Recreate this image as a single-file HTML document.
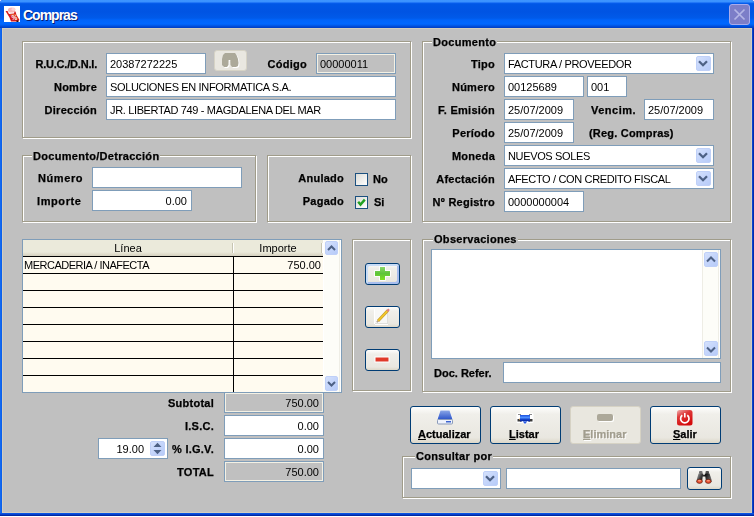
<!DOCTYPE html>
<html><head><meta charset="utf-8">
<style>
*{box-sizing:border-box;margin:0;padding:0}
html,body{width:754px;height:517px;overflow:hidden;background:#fff}
body{position:relative;font-family:"Liberation Sans",sans-serif;font-size:11px;color:#000}
.l,.lr,.gt,.in,.cb,.t{will-change:transform}
.a{position:absolute}
#win{position:absolute;left:0;top:0;width:754px;height:516px;background:#0831d9;border-radius:3px 3px 0 0;overflow:hidden}
#title{position:absolute;left:0;top:0;width:754px;height:28px;background:linear-gradient(to bottom,#3d95ff 0px,#3a92ff 2px,#0a60f0 3px,#0058e6 4px,#0054e3 12px,#005ae9 18px,#0064fa 20px,#0068ff 24px,#0058e8 25.5px,#0046d0 27px,#003ec0 28px)}
#body{position:absolute;left:2px;top:28px;width:750px;height:485px;background:#c0c0c0;border:1px solid #d2cebf}
#lb{position:absolute;left:0;top:28px;width:2px;height:488px;background:linear-gradient(to right,#166ef2,#0a5be8)}
#rb{position:absolute;left:752px;top:28px;width:2px;height:488px;background:linear-gradient(to right,#0a4fe0,#00209a)}
#bb{position:absolute;left:0;top:513px;width:754px;height:3px;background:linear-gradient(to bottom,#0b5cf0,#0540c8,#001c90)}
.g{position:absolute;border:1px solid #a09c8a;box-shadow:inset 1px 1px 0 #fff,1px 1px 0 #fff}
.gt{position:absolute;background:#c0c0c0;font-weight:bold;line-height:13px;padding:0 1px 0 1px;white-space:nowrap;letter-spacing:0.3px}
.l,.lr,.gt{-webkit-text-stroke:0.25px currentColor}
.l{position:absolute;font-weight:bold;line-height:13px;white-space:nowrap}
.lr{position:absolute;font-weight:bold;line-height:13px;white-space:nowrap;text-align:right;letter-spacing:0.25px}
.in{position:absolute;border:1px solid #7f9db9;background:#fff;line-height:13px;padding:4px 0 0 3px;white-space:nowrap;letter-spacing:-0.35px;overflow:hidden}
.n{letter-spacing:0 !important}
.dis{background:#c0c0c0;box-shadow:inset 1px 1px 0 #f4f1e4,inset -1px -1px 0 #f4f1e4}
.r{text-align:right;padding:4px 4px 0 0}
.cb{position:absolute;border:1px solid #7f9db9;background:#fff;line-height:13px;padding:4px 0 0 3px;white-space:nowrap;letter-spacing:-0.35px}
.dd{position:absolute;width:15px;height:15px;border-radius:2px;background:linear-gradient(135deg,#d5e1fc 0%,#c4d5fb 50%,#b7cbf8 100%);border:1px solid #bfd0f8}
.chev{position:absolute;left:2px;top:4px}
.btn{position:absolute;border:1px solid #003c74;border-radius:3px;background:linear-gradient(to bottom,#fefefd 0%,#f0efea 20%,#e9e7e0 85%,#dcd7c8 100%)}
.t{position:absolute;line-height:13px;white-space:nowrap;letter-spacing:-0.35px}
</style></head><body>
<div id="win">
 <div id="title"></div>
 <div id="lb"></div><div id="rb"></div><div id="bb"></div>
 <div id="body"></div>
</div>

<!-- title icon -->
<div class="a" style="left:4px;top:6px;width:16px;height:16px;background:#fff"></div>
<svg class="a" style="left:4px;top:6px" width="16" height="16" viewBox="0 0 16 16">
 <ellipse cx="7.5" cy="4" rx="3.6" ry="2.6" fill="#f6b8b8"/>
 <ellipse cx="9.5" cy="3.2" rx="2" ry="1.6" fill="#fad4d4"/>
 <path d="M1.5 5 L3.5 5 L5 8 L10 7.5 L10.5 5.5 L11.5 5.5 L12.5 9 L15.5 14 L13.5 15.5 L7 15.5 L5.5 11.5 Z" fill="#d61c1c"/>
 <path d="M6 9 L12 8.6" stroke="#f08040" stroke-width="0.8"/>
 <text x="7.6" y="14.4" font-size="6.5" fill="#fff" font-family="Liberation Sans" font-weight="bold">%</text>
 <rect x="12.5" y="14.5" width="2" height="1.5" fill="#301010"/>
</svg>
<div class="a" style="left:24px;top:9px;font-size:14px;line-height:15px;font-weight:bold;color:#0a1a6e;letter-spacing:-1px">Compras</div>
<div class="a" style="left:23px;top:8px;font-size:14px;line-height:15px;font-weight:bold;color:#fff;letter-spacing:-1px">Compras</div>

<!-- close button -->
<div class="a" style="left:729px;top:4px;width:21px;height:21px;border:1px solid #a9acec;border-radius:3px;background:#7c7ec8"></div>
<svg class="a" style="left:729px;top:4px" width="21" height="21"><path d="M5.5 5.5 L15.5 15.5 M15.5 5.5 L5.5 15.5" stroke="#b4b6e6" stroke-width="1.7"/></svg>

<!-- ===== Group 1 ===== -->
<div class="g" style="left:22px;top:41px;width:389px;height:97px"></div>
<div class="lr" style="left:20px;top:58px;width:77px;letter-spacing:-0.2px">R.U.C./D.N.I.</div>
<div class="lr" style="left:20px;top:81px;width:77px">Nombre</div>
<div class="lr" style="left:20px;top:104px;width:77px">Dirección</div>
<div class="in n" style="left:106px;top:53px;width:100px;height:21px">20387272225</div>
<div class="a" style="left:214px;top:50px;width:33px;height:21px;border:1px solid #d6d3c6;border-radius:3px;background:#e9e7e0"></div>
<svg class="a" style="left:218px;top:50px" width="24" height="20" viewBox="0 0 24 20">
 <path d="M7 3 L17 3 L18.5 5 L20 9 L20.5 13 L20 16 L18 17 L14 17 L12.5 15 L12.3 10 L10.6 10 L10.5 15 L9 17 L6 17 L4 15 L4 9 L5 5 Z" fill="#fff" transform="translate(1,1)"/>
 <path d="M7 3 L17 3 L18.5 5 L20 9 L20.5 13 L20 16 L18 17 L14 17 L12.5 15 L12.3 10 L10.6 10 L10.5 15 L9 17 L6 17 L4 15 L4 9 L5 5 Z" fill="#aca999"/>
</svg>
<div class="lr" style="left:250px;top:58px;width:57px">Código</div>
<div class="in dis n" style="left:316px;top:53px;width:80px;height:21px">00000011</div>
<div class="in" style="left:106px;top:76px;width:290px;height:21px">SOLUCIONES EN INFORMATICA S.A.</div>
<div class="in" style="left:106px;top:99px;width:290px;height:21px">JR. LIBERTAD 749 - MAGDALENA DEL MAR</div>

<!-- ===== Documento group ===== -->
<div class="g" style="left:422px;top:41px;width:309px;height:181px"></div>
<div class="gt" style="left:432px;top:36px">Documento</div>
<div class="lr" style="left:421px;top:58px;width:74px">Tipo</div>
<div class="lr" style="left:421px;top:81px;width:74px">Número</div>
<div class="lr" style="left:421px;top:104px;width:74px">F. Emisión</div>
<div class="lr" style="left:421px;top:127px;width:74px">Período</div>
<div class="lr" style="left:421px;top:150px;width:74px">Moneda</div>
<div class="lr" style="left:421px;top:173px;width:74px">Afectación</div>
<div class="lr" style="left:421px;top:196px;width:74px">Nº Registro</div>

<div class="cb" style="left:504px;top:53px;width:210px;height:21px">FACTURA / PROVEEDOR</div>
<div class="dd" style="left:696px;top:56px"><svg class="chev" style="left:1px;top:2.5px" width="10" height="7"><path d="M1 1.2 L5 5.2 L9 1.2" stroke="#4d6185" stroke-width="2.3" fill="none"/></svg></div>
<div class="in n" style="left:504px;top:76px;width:80px;height:21px">00125689</div>
<div class="in n" style="left:587px;top:76px;width:40px;height:21px">001</div>
<div class="in n" style="left:504px;top:99px;width:70px;height:21px">25/07/2009</div>
<div class="l" style="left:591px;top:104px;letter-spacing:0.5px">Vencim.</div>
<div class="in n" style="left:644px;top:99px;width:70px;height:21px">25/07/2009</div>
<div class="in n" style="left:504px;top:122px;width:70px;height:21px">25/07/2009</div>
<div class="l" style="left:589px;top:127px;letter-spacing:0.2px">(Reg. Compras)</div>
<div class="cb" style="left:504px;top:145px;width:210px;height:21px">NUEVOS SOLES</div>
<div class="dd" style="left:696px;top:148px"><svg class="chev" style="left:1px;top:2.5px" width="10" height="7"><path d="M1 1.2 L5 5.2 L9 1.2" stroke="#4d6185" stroke-width="2.3" fill="none"/></svg></div>
<div class="cb" style="left:504px;top:168px;width:210px;height:21px">AFECTO / CON CREDITO FISCAL</div>
<div class="dd" style="left:696px;top:171px"><svg class="chev" style="left:1px;top:2.5px" width="10" height="7"><path d="M1 1.2 L5 5.2 L9 1.2" stroke="#4d6185" stroke-width="2.3" fill="none"/></svg></div>
<div class="in n" style="left:504px;top:191px;width:80px;height:21px">0000000004</div>

<!-- ===== Documento/Detraccion ===== -->
<div class="g" style="left:22px;top:155px;width:234px;height:67px"></div>
<div class="gt" style="left:32px;top:150px">Documento/Detracción</div>
<div class="l" style="left:38px;top:172px;letter-spacing:0.6px">Número</div>
<div class="l" style="left:37px;top:195px;letter-spacing:0.6px">Importe</div>
<div class="in" style="left:92px;top:167px;width:150px;height:21px"></div>
<div class="in r n" style="left:92px;top:190px;width:100px;height:21px">0.00</div>

<!-- ===== Anulado/Pagado ===== -->
<div class="g" style="left:267px;top:155px;width:144px;height:67px"></div>
<div class="lr" style="left:281px;top:172px;width:63px">Anulado</div>
<div class="lr" style="left:281px;top:195px;width:63px">Pagado</div>
<div class="a" style="left:355px;top:173px;width:13px;height:13px;border:1px solid #1c5180;background:linear-gradient(135deg,#dcdcd7,#fff)"></div>
<div class="l" style="left:373px;top:173px">No</div>
<div class="a" style="left:355px;top:196px;width:13px;height:13px;border:1px solid #1c5180;background:linear-gradient(135deg,#dcdcd7,#fff)"></div>
<svg class="a" style="left:356px;top:197px" width="11" height="11"><path d="M2.2 4.8 L4.5 7.6 L8.8 2.6" stroke="#21a121" stroke-width="2.4" fill="none"/></svg>
<div class="l" style="left:374px;top:196px">Si</div>

<!-- ===== Table ===== -->
<div class="a" style="left:22px;top:239px;width:320px;height:154px;border:1px solid #7f9db9;background:#fffbf0"></div>
<div class="a" style="left:23px;top:240px;width:300px;height:16px;background:linear-gradient(to bottom,#ebeadb 0,#ebeadb 12px,#e0ddcc 14px,#d4d0bf 16px)"></div>
<div class="a" style="left:232px;top:243px;width:1px;height:10px;background:#c7c5b2"></div>
<div class="a" style="left:233px;top:243px;width:1px;height:10px;background:#fff"></div>
<div class="a" style="left:321px;top:243px;width:1px;height:10px;background:#c7c5b2"></div>
<div class="a" style="left:322px;top:243px;width:1px;height:10px;background:#fff"></div>
<div class="t n" style="left:23px;top:242px;width:210px;text-align:center">Línea</div>
<div class="t n" style="left:234px;top:242px;width:88px;text-align:center">Importe</div>
<div class="a" style="left:23px;top:256px;width:300px;height:1px;background:#000"></div>
<div class="a" style="left:23px;top:273px;width:300px;height:1px;background:#000"></div>
<div class="a" style="left:23px;top:290px;width:300px;height:1px;background:#000"></div>
<div class="a" style="left:23px;top:307px;width:300px;height:1px;background:#000"></div>
<div class="a" style="left:23px;top:324px;width:300px;height:1px;background:#000"></div>
<div class="a" style="left:23px;top:341px;width:300px;height:1px;background:#000"></div>
<div class="a" style="left:23px;top:358px;width:300px;height:1px;background:#000"></div>
<div class="a" style="left:23px;top:375px;width:300px;height:1px;background:#000"></div>
<div class="a" style="left:233px;top:256px;width:1px;height:136px;background:#000"></div>

<div class="t" style="left:24px;top:259px;letter-spacing:-0.5px">MERCADERIA / INAFECTA</div>
<div class="t n" style="left:234px;top:259px;width:87px;text-align:right">750.00</div>
<!-- scrollbar -->
<div class="a" style="left:323px;top:240px;width:18px;height:152px;background:#fdfdf8;border-left:1px solid #fff;box-shadow:inset -1px 0 0 #fff,inset -2px 0 0 #efeee6"></div>
<div class="dd" style="left:325px;top:241px;width:13px;height:14px"><svg class="chev" style="left:1px;top:3px" width="9" height="6"><path d="M1 5 L4.5 1.5 L8 5" stroke="#4d6185" stroke-width="2" fill="none"/></svg></div>
<div class="dd" style="left:325px;top:376px;width:13px;height:15px"><svg class="chev" style="left:1px;top:4px" width="9" height="6"><path d="M1 1 L4.5 4.5 L8 1" stroke="#4d6185" stroke-width="2" fill="none"/></svg></div>

<!-- ===== Buttons group ===== -->
<div class="g" style="left:352px;top:239px;width:59px;height:152px"></div>
<div class="btn" style="left:365px;top:263px;width:35px;height:22px;box-shadow:inset 2px 2px 0 #c8dcf6,inset -2px -2px 0 #a6bdee"></div>
<svg class="a" style="left:374px;top:266px" width="17" height="15"><defs><linearGradient id="gg" x1="0" y1="0" x2="0" y2="1"><stop offset="0" stop-color="#8ad86a"/><stop offset="0.5" stop-color="#5ec43a"/><stop offset="1" stop-color="#7ee020"/></linearGradient></defs>
<path d="M6 1 H11 V5 H16 V10 H11 V14 H6 V10 H1 V5 H6 Z" fill="#fff" stroke="#fff" stroke-width="2" stroke-linejoin="round" opacity="0.9"/>
<path d="M6 1 H11 V5 H16 V10 H11 V14 H6 V10 H1 V5 H6 Z" fill="url(#gg)"/></svg>
<div class="btn" style="left:365px;top:306px;width:35px;height:22px"></div>
<svg class="a" style="left:373px;top:308px" width="18" height="18">
 <rect x="1" y="1" width="1" height="15" fill="#fff"/>
 <rect x="2" y="16" width="13" height="1" fill="#fff"/>
 <rect x="2" y="1" width="13" height="15" fill="#e0e0dc"/><rect x="2" y="1" width="12" height="14" fill="#f8f8f6"/>
 <path d="M5 13 L14.8 2.5" stroke="#c09a30" stroke-width="2.8"/>
 <path d="M5 13 L14.8 2.5" stroke="#f4c828" stroke-width="1.8"/>
 <path d="M14.2 3.2 L16 1.3" stroke="#e08080" stroke-width="2.2"/>
 <path d="M3.8 14.3 L5.2 12.8" stroke="#b0a090" stroke-width="1.6"/>
</svg>
<div class="btn" style="left:365px;top:349px;width:35px;height:22px"></div>
<svg class="a" style="left:374px;top:356px" width="17" height="8"><rect x="1" y="1" width="14" height="5" fill="#e03a2a" stroke="#fff" stroke-width="1"/></svg>

<!-- ===== Observaciones ===== -->
<div class="g" style="left:422px;top:239px;width:309px;height:153px"></div>
<div class="gt" style="left:433px;top:233px">Observaciones</div>
<div class="a" style="left:431px;top:249px;width:290px;height:110px;border:1px solid #7f9db9;background:#fff"></div>
<div class="a" style="left:702px;top:250px;width:18px;height:108px;background:#fdfdf8;border-left:1px solid #eeede5;box-shadow:inset -1px 0 0 #fff,inset -2px 0 0 #efeee6"></div>
<div class="dd" style="left:704px;top:252px;width:14px;height:15px"><svg class="chev" style="left:1px;top:3px" width="10" height="7"><path d="M1 5.5 L5 1.5 L9 5.5" stroke="#4d6185" stroke-width="2" fill="none"/></svg></div>
<div class="dd" style="left:704px;top:341px;width:14px;height:15px"><svg class="chev" style="left:1px;top:4px" width="10" height="7"><path d="M1 1.5 L5 5.5 L9 1.5" stroke="#4d6185" stroke-width="2" fill="none"/></svg></div>
<div class="l" style="left:434px;top:367px">Doc. Refer.</div>
<div class="in" style="left:503px;top:362px;width:218px;height:21px"></div>

<!-- ===== Totals ===== -->
<div class="lr" style="left:151px;top:397px;width:63px">Subtotal</div>
<div class="lr" style="left:151px;top:420px;width:63px">I.S.C.</div>
<div class="lr" style="left:151px;top:443px;width:63px">% I.G.V.</div>
<div class="lr" style="left:151px;top:466px;width:63px">TOTAL</div>
<div class="in dis r n" style="left:224px;top:392px;width:100px;height:21px">750.00</div>
<div class="in r n" style="left:224px;top:415px;width:100px;height:21px">0.00</div>
<div class="in r n" style="left:224px;top:438px;width:100px;height:21px">0.00</div>
<div class="in dis r n" style="left:224px;top:461px;width:100px;height:21px">750.00</div>
<div class="in r n" style="left:98px;top:438px;width:70px;height:21px;padding-right:23px">19.00</div>
<div class="dd" style="left:150px;top:441px;width:15px;height:15px"></div>
<svg class="a" style="left:146px;top:436px" width="24" height="24"><path d="M7.5 11 L11.5 6.8 L15.5 11 Z M7.5 14 L11.5 18.2 L15.5 14 Z" fill="#4d6185"/></svg>

<!-- ===== Action buttons ===== -->
<div class="btn" style="left:410px;top:406px;width:71px;height:38px"></div>
<svg class="a" style="left:436px;top:409px" width="18" height="17" viewBox="0 0 18 17">
 <path d="M4.5 1 L13.5 1 L17 10 L1 10 Z" fill="#fff" opacity="0.8"/>
 <defs><linearGradient id="dg" x1="0" y1="0" x2="0" y2="1"><stop offset="0" stop-color="#8aa6e6"/><stop offset="0.5" stop-color="#5a7cd8"/><stop offset="1" stop-color="#2c54c8"/></linearGradient></defs>
 <path d="M4.5 1.5 L13.5 1.5 L16.5 10.5 L1.5 10.5 Z" fill="url(#dg)"/>
 <rect x="1.5" y="10.5" width="15" height="4.5" rx="1" fill="#eef2fc" stroke="#8a9ab8" stroke-width="1"/>
 <rect x="10" y="12" width="5" height="1.5" fill="#3c64d0"/>
</svg>
<div class="l" style="left:418px;top:428px"><u>A</u>ctualizar</div>
<div class="btn" style="left:490px;top:406px;width:71px;height:38px"></div>
<svg class="a" style="left:516px;top:409px" width="18" height="17" viewBox="0 0 18 17">
 <defs><linearGradient id="pg" x1="0" y1="0" x2="0" y2="1"><stop offset="0" stop-color="#1a50e0"/><stop offset="0.4" stop-color="#5090ff"/><stop offset="0.7" stop-color="#1040c8"/><stop offset="1" stop-color="#001a90"/></linearGradient></defs>
 <rect x="4" y="1" width="10" height="4" fill="#fff"/>
 <rect x="0.5" y="4" width="17" height="10" rx="1.5" fill="#fff"/>
 <rect x="2" y="5" width="3" height="1" fill="#8a8a8a"/>
 <rect x="13" y="5" width="3" height="1" fill="#8a8a8a"/>
 <rect x="1.5" y="10" width="4" height="2.5" fill="#3a3a3a"/>
 <rect x="12.5" y="10" width="4" height="2.5" fill="#3a3a3a"/>
 <rect x="3" y="9.6" width="1.6" height="1" fill="#f0b060"/>
 <rect x="4" y="6" width="10" height="6.5" fill="url(#pg)"/>
 <path d="M5.5 12 L12.5 12 L9 15.8 Z" fill="#fff"/>
 <path d="M6.5 12.3 L11.5 12.3 L9 15 Z" fill="#2a5ae0"/>
</svg>
<div class="l" style="left:509px;top:428px"><u>L</u>istar</div>
<div class="a" style="left:570px;top:406px;width:71px;height:38px;border:1px solid #d6d2c4;border-radius:3px;background:#e9e7df"></div>
<svg class="a" style="left:596px;top:413px" width="18" height="9" viewBox="0 0 18 9">
 <rect x="2" y="2" width="16" height="7" rx="2" fill="#fff"/>
 <rect x="1" y="1" width="16" height="7" rx="2" fill="#aca899"/>
</svg>
<div class="l" style="left:583px;top:428px;color:#a19d8e;text-shadow:1px 1px 0 #fff"><u>E</u>liminar</div>
<div class="btn" style="left:650px;top:406px;width:71px;height:38px"></div>
<svg class="a" style="left:677px;top:410px" width="16" height="16" viewBox="0 0 16 16">
 <defs><linearGradient id="rg" x1="0" y1="0" x2="0.5" y2="1"><stop offset="0" stop-color="#f0b0b0"/><stop offset="0.4" stop-color="#de3a3a"/><stop offset="1" stop-color="#d40a0a"/></linearGradient></defs>
 <rect x="0" y="0" width="15.5" height="15.5" rx="2.5" fill="url(#rg)"/>
 <path d="M5.3 5.3 A4.2 4.2 0 1 0 10.3 5.3" stroke="#fff" stroke-width="1.7" fill="none"/>
 <path d="M7.8 3 L7.8 7.5" stroke="#fff" stroke-width="1.6"/>
</svg>
<div class="l" style="left:673px;top:428px"><u>S</u>alir</div>

<!-- ===== Consultar por ===== -->
<div class="g" style="left:402px;top:456px;width:329px;height:42px"></div>
<div class="gt" style="left:415px;top:450px">Consultar por</div>
<div class="cb" style="left:411px;top:468px;width:90px;height:21px"></div>
<div class="dd" style="left:483px;top:471px"><svg class="chev" style="left:1px;top:2.5px" width="10" height="7"><path d="M1 1.2 L5 5.2 L9 1.2" stroke="#4d6185" stroke-width="2.3" fill="none"/></svg></div>
<div class="in" style="left:506px;top:468px;width:175px;height:21px"></div>
<div class="btn" style="left:687px;top:467px;width:35px;height:23px"></div>
<svg class="a" style="left:696px;top:470px" width="17" height="16" viewBox="0 0 17 16">
 <defs><linearGradient id="bg1" x1="0" y1="0" x2="1" y2="0.3"><stop offset="0" stop-color="#b0b0b0"/><stop offset="0.35" stop-color="#404040"/><stop offset="0.6" stop-color="#101010"/><stop offset="1" stop-color="#606060"/></linearGradient></defs>
 <rect x="3" y="1" width="3.5" height="3" rx="1" fill="#707070"/>
 <rect x="9.5" y="1" width="3.5" height="3" rx="1" fill="#505050"/>
 <path d="M2.5 3.5 L7 3.5 L7.5 5 L8.5 5 L9 3.5 L13.5 3.5 L15.5 9.5 L15.5 12 L10 12 L9.3 6.5 L6.7 6.5 L6 12 L0.8 12 L0.8 9.5 Z" fill="url(#bg1)"/>
 <ellipse cx="3.5" cy="11.3" rx="2.9" ry="2.1" fill="#e2482a" stroke="#4a2010" stroke-width="0.6"/>
 <ellipse cx="12.3" cy="11.3" rx="2.9" ry="2.1" fill="#e2482a" stroke="#4a2010" stroke-width="0.6"/>
 <ellipse cx="3.5" cy="10.8" rx="1.7" ry="0.8" fill="#ff9a78"/>
 <ellipse cx="12.3" cy="10.8" rx="1.7" ry="0.8" fill="#ff9a78"/>
</svg>
</body></html>
